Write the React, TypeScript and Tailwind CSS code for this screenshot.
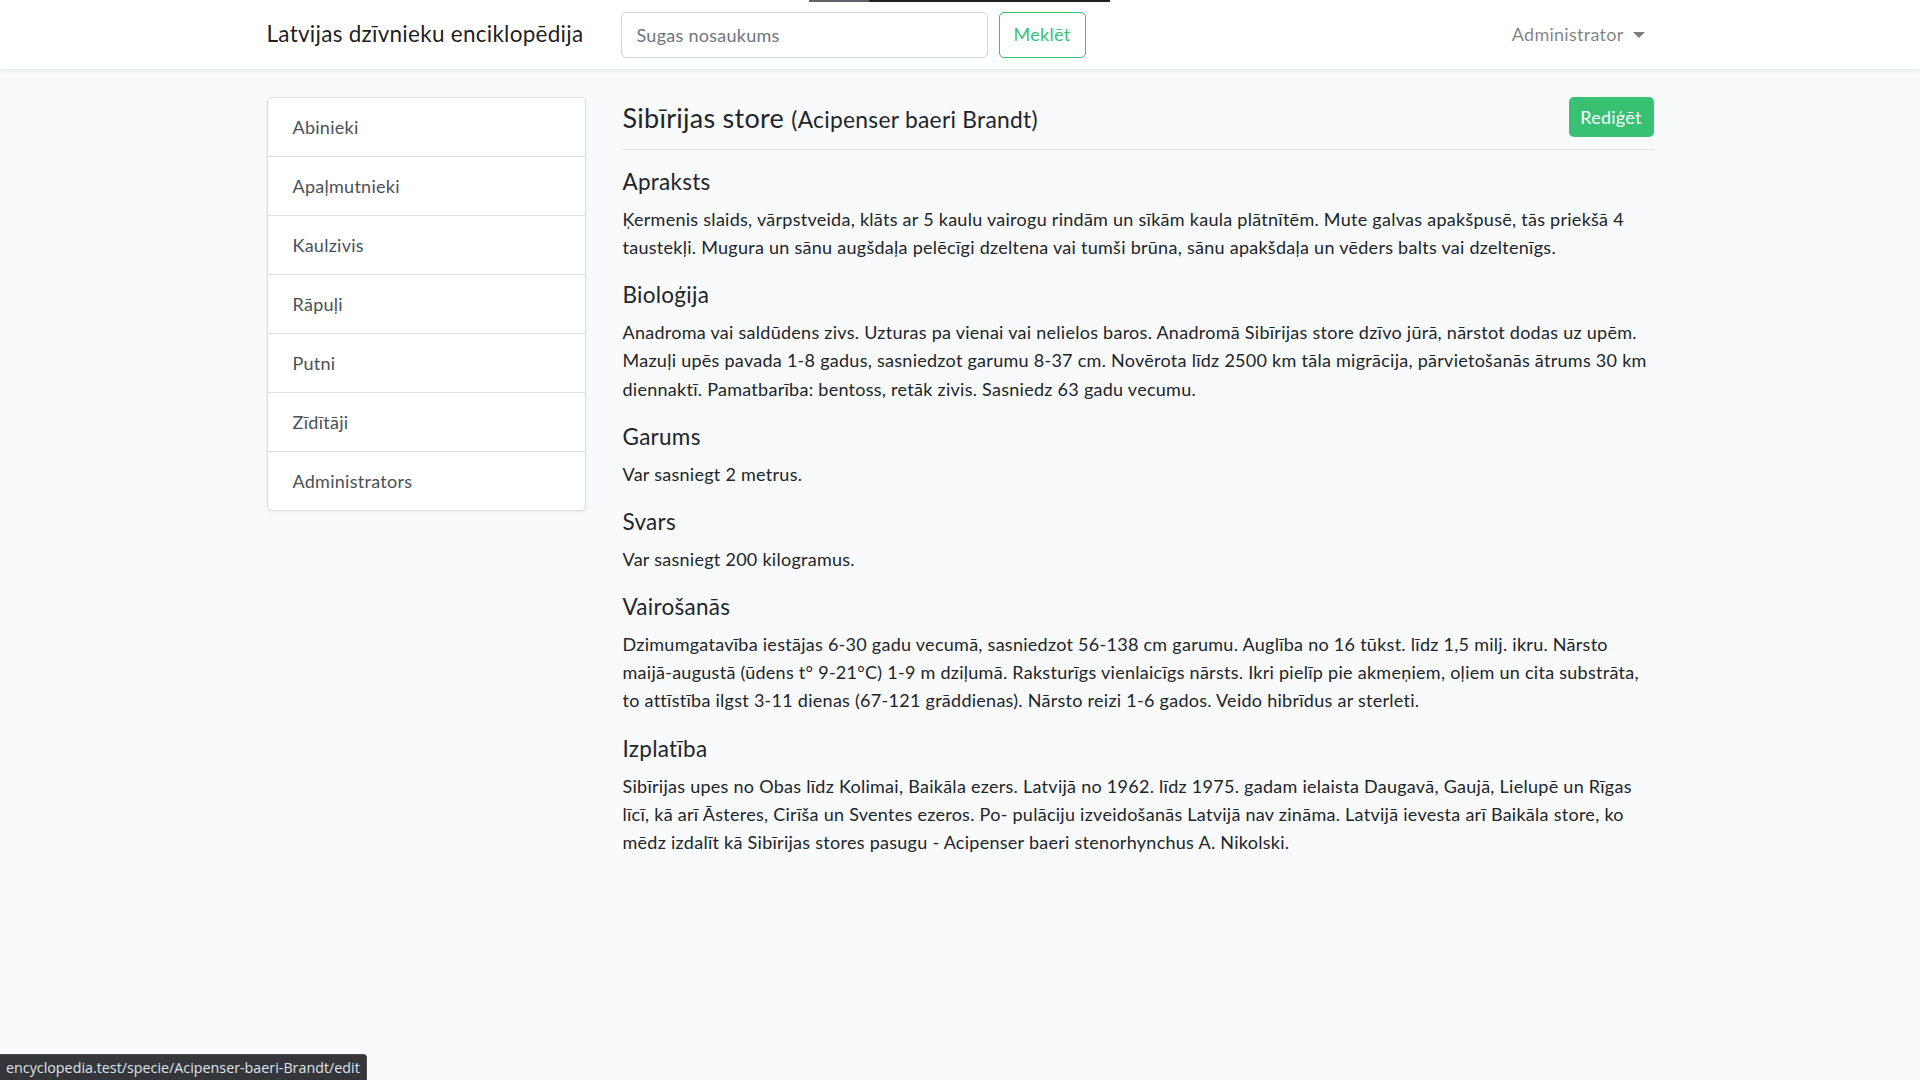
const categories = ['Abinieki', 'Apaļmutnieki', 'Kaulzivis', 'Rāpuļi', 'Putni', 'Zīdītāji', 'Administrators'];

const sections = [
	{
		title: 'Apraksts',
		text: 'Ķermenis slaids, vārpstveida, klāts ar 5 kaulu vairogu rindām un sīkām kaula plātnītēm. Mute galvas apakšpusē, tās priekšā 4 taustekļi. Mugura un sānu augšdaļa pelēcīgi dzeltena vai tumši brūna, sānu apakšdaļa un vēders balts vai dzeltenīgs.',
	},
	{
		title: 'Bioloģija',
		text: 'Anadroma vai saldūdens zivs. Uzturas pa vienai vai nelielos baros. Anadromā Sibīrijas store dzīvo jūrā, nārstot dodas uz upēm. Mazuļi upēs pavada 1-8 gadus, sasniedzot garumu 8-37 cm. Novērota līdz 2500 km tāla migrācija, pārvietošanās ātrums 30 km diennaktī. Pamatbarība: bentoss, retāk zivis. Sasniedz 63 gadu vecumu.',
	},
	{ title: 'Garums', text: 'Var sasniegt 2 metrus.' },
	{ title: 'Svars', text: 'Var sasniegt 200 kilogramus.' },
	{
		title: 'Vairošanās',
		text: 'Dzimumgatavība iestājas 6-30 gadu vecumā, sasniedzot 56-138 cm garumu. Auglība no 16 tūkst. līdz 1,5 milj. ikru. Nārsto maijā-augustā (ūdens t° 9-21°C) 1-9 m dziļumā. Raksturīgs vienlaicīgs nārsts. Ikri pielīp pie akmeņiem, oļiem un cita substrāta, to attīstība ilgst 3-11 dienas (67-121 grāddienas). Nārsto reizi 1-6 gados. Veido hibrīdus ar sterleti.',
	},
	{
		title: 'Izplatība',
		text: 'Sibīrijas upes no Obas līdz Kolimai, Baikāla ezers. Latvijā no 1962. līdz 1975. gadam ielaista Daugavā, Gaujā, Lielupē un Rīgas līcī, kā arī Āsteres, Cirīša un Sventes ezeros. Po- pulāciju izveidošanās Latvijā nav zināma. Latvijā ievesta arī Baikāla store, ko mēdz izdalīt kā Sibīrijas stores pasugu - Acipenser baeri stenorhynchus A. Nikolski.',
	},
];

export default function App() {
	return (
		<div className="min-h-screen bg-[#f8fafc] text-[#212529] font-['Lato','Open_Sans',sans-serif] tracking-[0.27px] relative">
			{/* loading strip at the very top */}
			<div className="absolute top-0 left-[809px] flex h-[2px] w-[301px]">
				<div className="w-[60px] bg-[#5f6368]" />
				<div className="flex-1 bg-[#202124]" />
			</div>

			<nav className="h-[69px] bg-white shadow-[0_2px_4px_rgba(0,0,0,0.075)]">
				<div className="mx-auto flex h-full w-[1387px] items-center">
					<a className="w-[354px] pb-[2px] text-[22.5px] text-black/90">Latvijas dzīvnieku enciklopēdija</a>
					<input
						placeholder="Sugas nosaukums"
						className="h-[46px] w-[367px] rounded-[5px] border border-[#ced4da] bg-white px-[15px] text-[18px] text-[#495057] placeholder:text-[#6c757d] focus:outline-none"
					/>
					<button className="ml-[11px] h-[46px] w-[87px] rounded-[5px] border border-[#38c172] text-[18px] text-[#38c172]">
						Meklēt
					</button>
					<div className="ml-auto mr-[9px] flex items-center gap-[9px] text-[18px] text-black/50">
						Administrator
						<span className="mt-[1px] h-0 w-0 border-x-[6px] border-t-[6px] border-x-transparent border-t-black/50" />
					</div>
				</div>
			</nav>

			<main className="mx-auto flex w-[1387px] gap-[37px] pt-[28px]">
				<div className="w-[319px] shrink-0 self-start overflow-hidden rounded-[5px] border border-black/[0.125] bg-white shadow-[0_1px_3px_rgba(0,0,0,0.08)]">
					{categories.map((c, i) => (
						<div
							key={c}
							className={`flex items-center px-[25px] text-[18px] text-[#495057] ${i > 0 ? 'h-[59px] border-t border-black/[0.125]' : 'h-[58px]'}`}
						>
							{c}
						</div>
					))}
				</div>

				<div className="w-[1031px]">
					<div className="flex h-[40px] items-center justify-between">
						<h4 className="text-[27px] leading-none">
							Sibīrijas store <small className="text-[22.8px]">(Acipenser baeri Brandt)</small>
						</h4>
						<button className="h-[40px] w-[85px] rounded-[5px] bg-[#38c172] text-[18px] text-white">Rediģēt</button>
					</div>
					<hr className="mt-[12px] mb-[18px] border-t border-black/[0.1]" />

					{sections.map((s) => (
						<div key={s.title}>
							<h5 className="mb-[10px] text-[22.5px] leading-[27px]">{s.title}</h5>
							<p className="mb-[20px] text-[18px] leading-[28.16px]">{s.text}</p>
						</div>
					))}
				</div>
			</main>

			<div className="fixed bottom-0 left-0 flex h-[26px] items-center rounded-tr-[4px] border-t border-r border-[#4a4b4f] bg-[#35363a] px-[6px] font-['Open_Sans',sans-serif] text-[14.3px] tracking-normal text-[#dfe3ea]">
				encyclopedia.test/specie/Acipenser-baeri-Brandt/edit
			</div>
		</div>
	);
}
